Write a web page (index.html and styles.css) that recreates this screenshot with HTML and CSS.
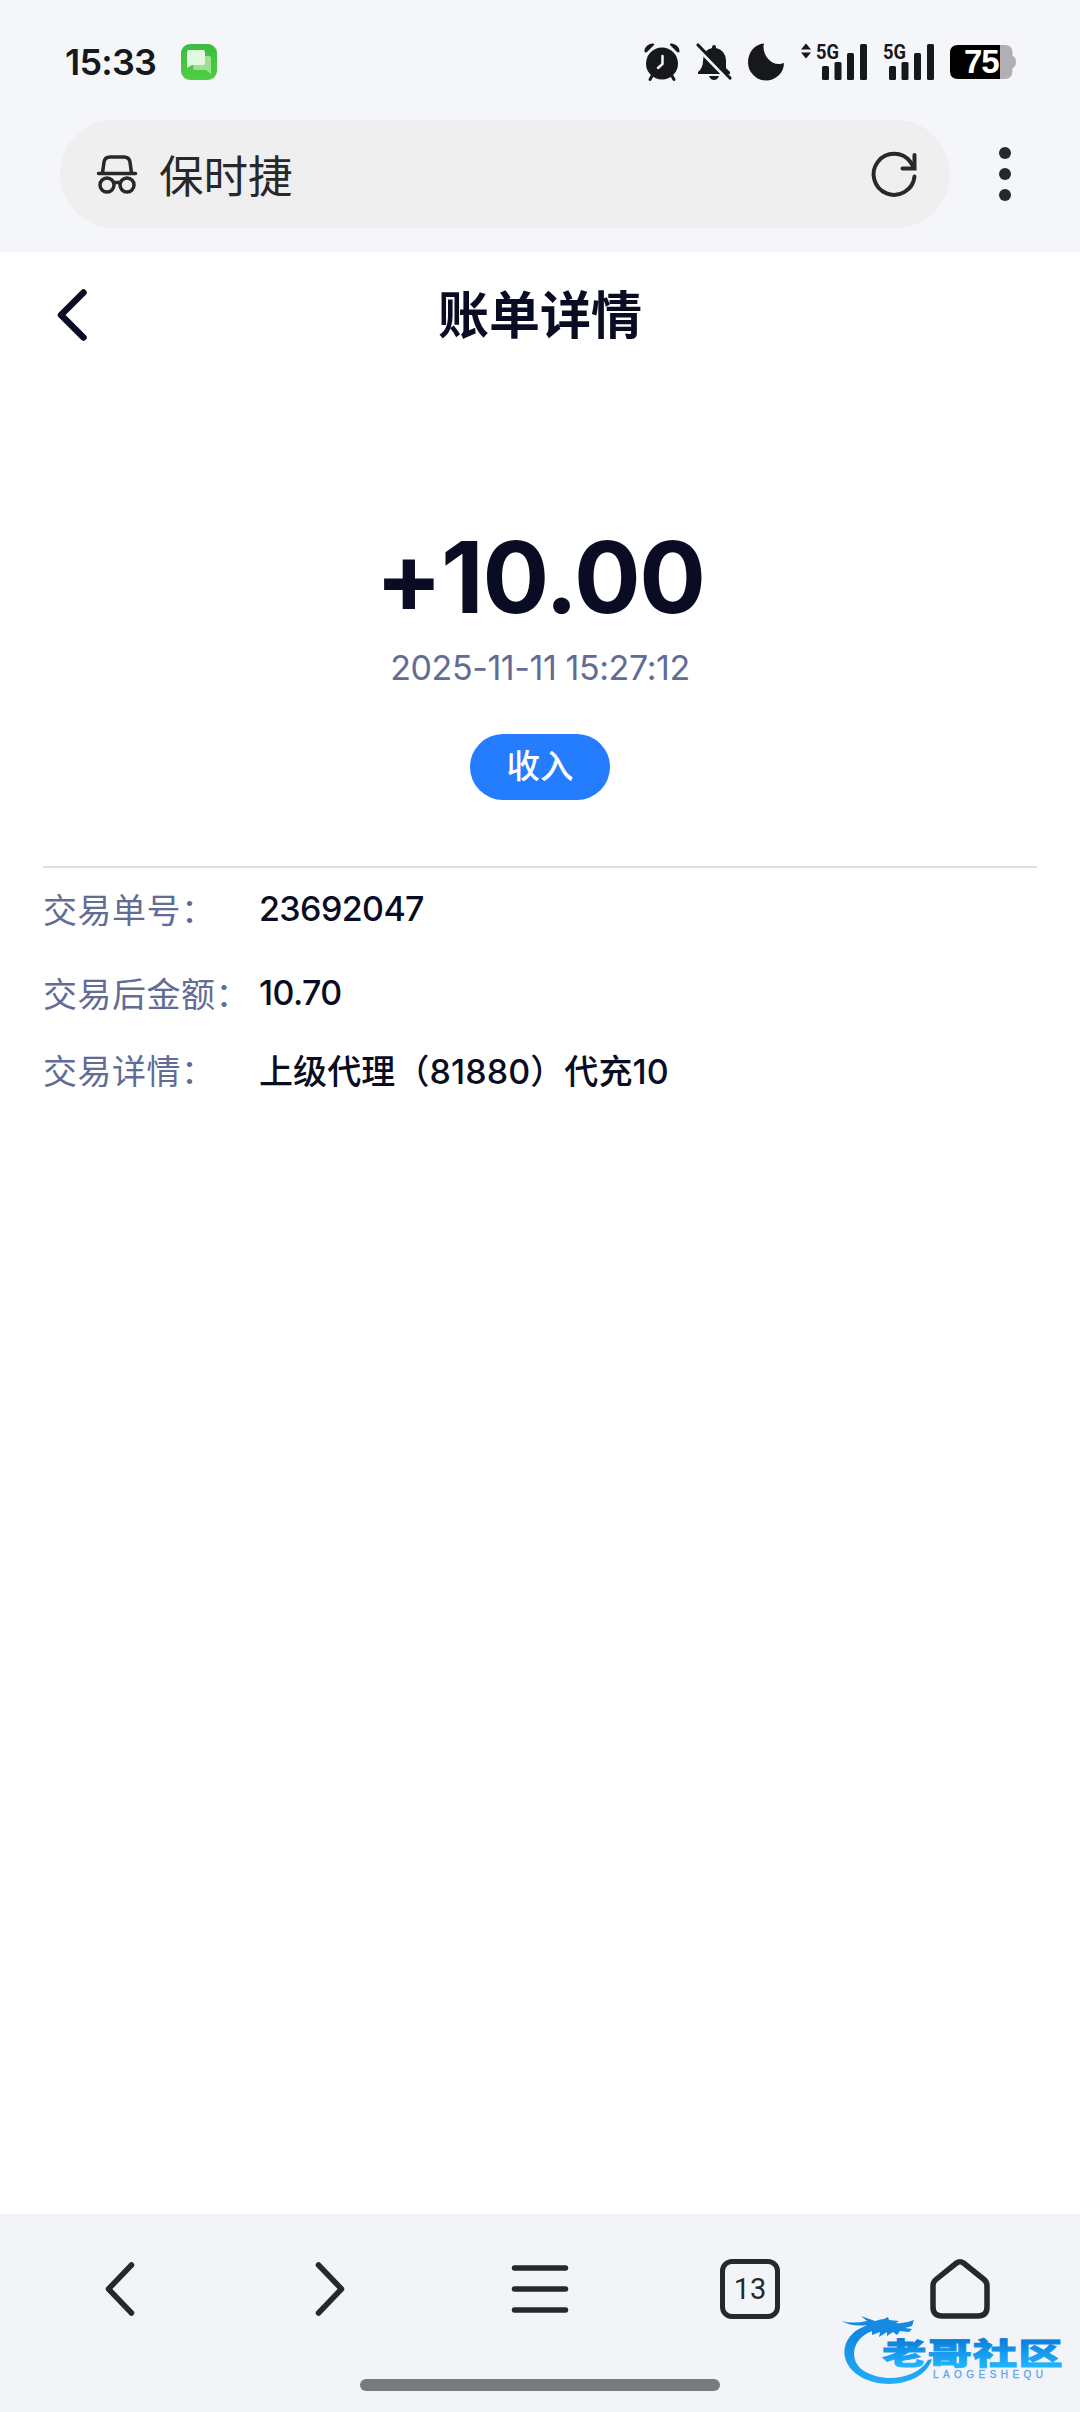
FILE: index.html
```html
<!DOCTYPE html>
<html lang="zh-CN">
<head>
    <meta charset="UTF-8">
    <meta name="viewport" content="width=device-width, initial-scale=1.0">
    <title>账单详情</title>
    <link rel="stylesheet" href="styles.css">
</head>
<body>
    <div class="status-bar">
        <span class="time">15:33</span>
        <svg class="message-icon" width="36" height="36" viewBox="0 0 36 36">
            <defs>
                <linearGradient id="green" x1="0" y1="0" x2="0" y2="1">
                    <stop offset="0" stop-color="#38bd3f"/>
                    <stop offset="1" stop-color="#50ce43"/>
                </linearGradient>
            </defs>
            <rect width="36" height="36" rx="9" fill="url(#green)"/>
            <path d="M15 12h13a2 2 0 0 1 2 2v16l-5-4H14a2 2 0 0 1-2-2v-9z" fill="#9be18f"/>
            <path d="M8 6h14a2 2 0 0 1 2 2v11a2 2 0 0 1-2 2H11l-5 3V8a2 2 0 0 1 2-2z" fill="#e2f8df"/>
        </svg>
        <div class="status-icons">
            <svg width="38" height="38" viewBox="0 0 38 38" fill="#17181a">
                <circle cx="19" cy="20.5" r="16"/>
                <path d="M1.5 8.5C1 4 6 0 10.5 0.5Q12 1 10.5 2.5L4 9Q2 10 1.5 8.5zM36.5 8.5C37 4 32 0 27.5 0.5Q26 1 27.5 2.5L34 9Q36 10 36.5 8.5z"/>
                <path d="M9 33l-2 3.5M29 33l2 3.5" stroke="#17181a" stroke-width="3" stroke-linecap="round"/>
                <path d="M19.5 13v8l-4.5 4" fill="none" stroke="#f5f6fa" stroke-width="2.5" stroke-linecap="round"/>
            </svg>
            <svg width="36" height="38" viewBox="0 0 36 38">
                <path d="M16 5q0-3 2-3t2 3q9 2 10 12v8l4 4v2H2v-2q5-4 5-11 0-11 9-13z" fill="#17181a"/>
                <path d="M13 33h10q-1.5 4-5 4t-5-4z" fill="#17181a"/>
                <path d="M4 -1l32 33" stroke="#f5f6fa" stroke-width="3.5" transform="translate(-4 4.5)"/>
                <path d="M2 2l32 33" stroke="#17181a" stroke-width="3.2" stroke-linecap="round"/>
            </svg>
            <svg width="38" height="38" viewBox="0 0 38 38">
                <path d="M17 0.5C14 11 25 25 37 20C37 30 28.5 37.500 19 37.500C9 37.500 1 29 1 19.500C1 9 8 1 17 0.5z" fill="#17181a"/>
            </svg>
            <svg width="68" height="38" viewBox="0 0 68 38" fill="#17181a">
                <path d="M6 0.5l5 6H1zM6 15.5l5-6H1z"/>
                <text class="net" x="16" y="16" textLength="23" lengthAdjust="spacingAndGlyphs">5G</text>
                <rect x="22" y="23" width="7" height="14" rx="1.5"/>
                <rect x="34.5" y="19" width="7" height="18" rx="1.5"/>
                <rect x="47" y="10" width="7" height="27" rx="1.5"/>
                <rect x="60" y="1" width="7" height="36" rx="1.5"/>
            </svg>
            <svg width="52" height="38" viewBox="0 0 52 38" fill="#17181a">
                <text class="net" x="0" y="16" textLength="23" lengthAdjust="spacingAndGlyphs">5G</text>
                <rect x="6" y="23" width="7" height="14" rx="1.5"/>
                <rect x="18.5" y="19" width="7" height="18" rx="1.5"/>
                <rect x="31" y="10" width="7" height="27" rx="1.5"/>
                <rect x="44" y="1" width="7" height="36" rx="1.5"/>
            </svg>
            <div class="battery">
                <svg width="66" height="34" viewBox="0 0 66 34">
                    <path d="M50 0h5q7 0 7.5 7v4q3.5 1 3.5 6t-3.5 6v3q-.5 8-7.5 8h-5z" fill="#afafb4"/>
                    <path d="M8 0h42v34H8q-8 0-8-8V8q0-8 8-8z" fill="#000"/>
                </svg>
                <span class="percent">75</span>
            </div>
        </div>
    </div>

    <div class="address-bar">
        <div class="address">
            <svg width="42" height="40" viewBox="0 0 42 40" fill="none" stroke="#262829" stroke-width="3.5" stroke-linecap="round">
                <path d="M2.5 19.5h37M6.5 19L8 8q1-5 6-5h14q5 0 6 5l1.5 11M18 28.5h6"/>
                <circle cx="11" cy="31" r="7"/>
                <circle cx="31" cy="31" r="7"/>
            </svg>
            <span class="site-name">保时捷</span>
            <svg width="48" height="48" viewBox="0 0 48 48" fill="none" stroke="#262829" stroke-width="4" stroke-linecap="round">
                <path d="M44.500 26.500A20.500 20.500 0 1 1 40.500 12L43.500 17"/>
                <path d="M44.500 5v13.500h-12"/>
            </svg>
        </div>
        <svg width="12" height="54" viewBox="0 0 12 54" fill="#262829">
            <circle cx="6" cy="6" r="6"/>
            <circle cx="6" cy="27" r="6"/>
            <circle cx="6" cy="48" r="6"/>
        </svg>
    </div>

    <main>
        <div class="page-header">
            <svg width="32" height="54" viewBox="0 0 32 54" fill="none" stroke="#0a0c23" stroke-width="6.5" stroke-linecap="round" stroke-linejoin="round">
                <path d="M28.500 4.500L6 27l22.500 22.500"/>
            </svg>
            <h1>账单详情</h1>
        </div>
        <div class="summary">
            <p class="amount">+10.00</p>
            <p class="date">2025-11-11 15:27:12</p>
            <span class="tag">收入</span>
        </div>
        <div class="details">
            <div class="row"><span class="label">交易单号：</span><span class="value">23692047</span></div>
            <div class="row"><span class="label">交易后金额：</span><span class="value">10.70</span></div>
            <div class="row last"><span class="label">交易详情：</span><span class="value">上级代理（81880）代充10</span></div>
        </div>
    </main>

    <footer>
        <nav>
            <svg width="60" height="60" viewBox="0 0 60 60"><path d="M41.500 6l-23 24 23 24"/></svg>
            <svg width="60" height="60" viewBox="0 0 60 60"><path d="M18.500 6l23 24-23 24"/></svg>
            <svg width="60" height="60" viewBox="0 0 60 60"><path d="M4.500 9h51M4.500 30h51M4.500 51h51"/></svg>
            <div class="tabs">13</div>
            <svg width="60" height="60" viewBox="0 0 60 60"><path d="M26.500 4q3.500-2.500 7 0L54 20.500q3 2.500 3 6V48q0 9-9 9H12q-9 0-9-9V26.500q0-3.500 3-6z"/></svg>
        </nav>
        <div class="home-bar"></div>
        <svg class="watermark" width="222" height="72" viewBox="0 0 222 72">
            <defs>
                <linearGradient id="ring" x1="0" y1="0" x2="0" y2="1">
                    <stop offset="0" stop-color="#0e82dc"/>
                    <stop offset="1" stop-color="#22adfb"/>
                </linearGradient>
                <linearGradient id="blue" gradientUnits="userSpaceOnUse" x1="0" y1="-25" x2="0" y2="3">
                    <stop offset="0" stop-color="#0c7cda"/>
                    <stop offset="1" stop-color="#20b6ff"/>
                </linearGradient>
            </defs>
            <path d="M34 14C9 20 6 45 22 55C43 68 76 62 86 44L90 43C83 67 44 75 19 61C-7 46-1 16 27 9z" fill="url(#ring)"/>
            <path d="M0 5q10 3 25 0l-6-5 14 5q6-2 9-2l4-2 1 3 10 1-3 2q9 1 18-3l-2 6-7 2 7 1-3 3-9-1-3 4-4-3-6 4v-4l-8 5 1-5-8 3v-4q-8 1-14 4l3-6 6-4Q10 11 0 5z" fill="#148ae3"/>
            <text class="mark-cn" transform="translate(40 48) scale(1.48 1)" fill="url(#blue)" stroke="url(#blue)" textLength="122">老哥社区</text>
            <text class="mark-en" x="91" y="62" textLength="110">LAOGESHEQU</text>
        </svg>
    </footer>
</body>
</html>
```

FILE: styles.css
```css
*{
    margin: 0;
    padding: 0;
    box-sizing: border-box;
}
body{
    height: 2412px;
    display: flex;
    flex-direction: column;
    background-color: #fff;
    color: #0a0c23;
    font-family: Inter, "Noto Sans CJK SC", sans-serif;
    overflow: hidden;
}
svg{
    display: block;
    flex-shrink: 0;
    overflow: visible;
}
.status-bar{
    height: 120px;
    padding: 4px 64px 0 65px;
    background-color: #f5f6fa;
    display: flex;
    align-items: center;
}
.time{
    width: 116px;
    font-size: 36px;
    font-weight: 600;
    letter-spacing: -0.8px;
    color: #17181a;
}
.status-icons{
    margin-left: auto;
    display: flex;
    align-items: center;
    gap: 15px;
}
.net{
    font: bold 21px Roboto, sans-serif;
}
.battery{
    position: relative;
}
.percent{
    position: absolute;
    left: 14px;
    top: -2px;
    font: bold 33px/38px "Liberation Sans", sans-serif;
    letter-spacing: -1px;
    color: #fff;
}
.address-bar{
    height: 132px;
    padding: 0 69px 24px 60px;
    background-color: #f5f6fa;
    display: flex;
    align-items: center;
    justify-content: space-between;
}
.address{
    width: 890px;
    height: 108px;
    padding: 0 32px 0 36px;
    border-radius: 54px;
    background-color: #efefef;
    display: flex;
    align-items: center;
}
.site-name{
    flex: 1;
    margin-left: 21px;
    font-family: "Noto Sans CJK SC", sans-serif;
    font-size: 44.5px;
    line-height: 60px;
    color: #262829;
}
main{
    flex: 1;
}
.page-header{
    height: 124px;
    padding: 2px 55px 0;
    display: flex;
    align-items: center;
}
.page-header h1{
    flex: 1;
    margin: -7px 32px 0 0;
    text-align: center;
    font-family: "Noto Sans CJK SC", sans-serif;
    font-size: 51px;
    font-weight: bold;
    line-height: 60px;
}
.summary{
    height: 492px;
    margin: 0 43px;
    padding-top: 141px;
    border-bottom: 2px solid #dedfe1;
    display: flex;
    flex-direction: column;
    align-items: center;
}
.amount{
    font-size: 99px;
    font-weight: bold;
    line-height: 120px;
    letter-spacing: -1.3px;
}
.date{
    margin-top: 10px;
    font-size: 34px;
    line-height: 42px;
    letter-spacing: -0.4px;
    color: #626c95;
}
.tag{
    width: 140px;
    height: 66px;
    margin-top: 45px;
    border-radius: 33px;
    background-color: #247cff;
    color: #fff;
    font-size: 33.5px;
    font-weight: 500;
    line-height: 64px;
    text-align: center;
}
.details{
    margin-top: -2px;
    padding: 0 43px;
    font-size: 34px;
}
.row{
    height: 84px;
    display: flex;
    align-items: center;
}
.row.last{
    height: 71px;
}
.label{
    width: 216px;
    white-space: nowrap;
    letter-spacing: 0.5px;
    color: #626c95;
}
.value{
    font-weight: 500;
    letter-spacing: -0.6px;
}
.last .value{
    letter-spacing: 0.1px;
}
footer{
    position: relative;
    height: 198px;
    background-color: #f2f4f8;
}
nav{
    height: 150px;
    padding: 0 15px;
    display: grid;
    grid-template-columns: repeat(5, 1fr);
    place-items: center;
}
nav svg{
    fill: none;
    stroke: #262829;
    stroke-width: 5.5;
    stroke-linecap: round;
    stroke-linejoin: round;
}
.tabs{
    width: 60px;
    height: 60px;
    border: 5.5px solid #262829;
    border-radius: 12px;
    font-family: Roboto, sans-serif;
    font-size: 29px;
    line-height: 51px;
    text-align: center;
    color: #262829;
}
.home-bar{
    width: 360px;
    height: 12px;
    margin: 15px auto 0;
    border-radius: 6px;
    background-color: #797a7c;
}
.watermark{
    position: absolute;
    left: 842px;
    top: 102px;
}
.mark-cn{
    font: 900 30px "Noto Sans CJK SC", sans-serif;
    stroke-width: 0.8px;
}
.mark-en{
    font: 10px "Liberation Sans", sans-serif;
    fill: #5ba6ee;
    stroke: #5ba6ee;
    stroke-width: 0.3px;
}
```
